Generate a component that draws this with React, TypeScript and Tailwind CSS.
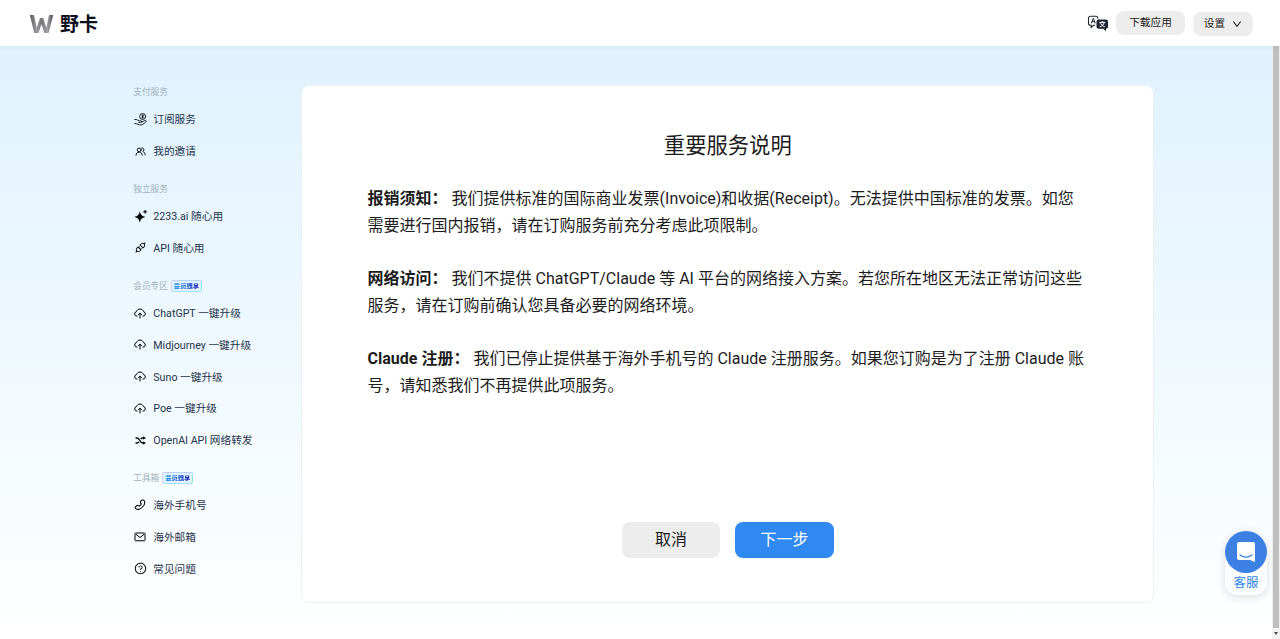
import type { ReactNode } from "react";
import { AiOutlineApi, AiOutlineQuestionCircle } from "react-icons/ai";

const HandCoinIcon = () => (
  <svg viewBox="0 0 24 24" className="w-[13px] h-[13px]" fill="none" stroke="currentColor" strokeWidth="1.6" strokeLinecap="round" strokeLinejoin="round">
    <circle cx="16" cy="6.5" r="5.5" />
    <path d="M17.8 4.8c-1-.7-3.6-.7-3.6.5 0 1.4 3.6.9 3.6 2.4 0 1.3-2.8 1.3-3.8.4M16 3v7" strokeWidth="1.3" />
    <path d="M1.5 12h3c2 0 3 2.500 5.500 2.500h3c2 0 2 2.800 0 2.800H9M15 16.500l5-2.500c2-1 3.500 1 2 2.300-3 2.900-6 5.700-9.500 5.700-4 0-6-2.500-11-2.500" />
  </svg>
);

const UsersIcon = () => (
  <svg viewBox="0 0 24 20" className="w-[11px] h-[9px]" fill="none" stroke="currentColor" strokeWidth="2" strokeLinecap="round" strokeLinejoin="round">
    <circle cx="9" cy="6.5" r="4.2" />
    <path d="M2 18.500c.3-4.500 3-7 7-7s6.700 2.500 7 7M14.500 2.300c3.500-.6 5.500 1.600 5 4.500-.2 1.500-1.200 2.700-2.500 3.300 3.500.8 5.300 3.700 5.500 7.400" />
  </svg>
);

const SparkIcon = () => (
  <svg viewBox="0 0 24 24" className="w-[13px] h-[13px]" fill="currentColor">
    <path d="M10.800 2.500c1.500 6.500 3.500 8.800 10.500 10.500-7 1.700-9 4-10.500 10.500C9.300 17 7.300 14.700.3 13c7-1.700 9-4 10.500-10.500Z" />
    <path d="M20.500 0c.6 2.100 1.200 2.700 3.300 3.300-2.100.6-2.700 1.200-3.300 3.300-.6-2.100-1.200-2.700-3.300-3.300 2.100-.6 2.700-1.200 3.300-3.300Z" stroke="currentColor" strokeWidth="1" />
  </svg>
);

const CloudUploadIcon = () => (
  <svg viewBox="0 0 24 22" className="w-3 h-[11px]" fill="none" stroke="currentColor" strokeWidth="2" strokeLinecap="round" strokeLinejoin="round">
    <path d="M6 16.300A4.600 4.600 0 0 1 5 7.200C6 3.900 8.800 2 12 2s6 1.900 7 5.200a4.600 4.600 0 0 1-1 9.100" />
    <path d="M12 20v-9.500M8.800 13.500 12 10.200l3.200 3.300" />
  </svg>
);

const ShuffleIcon = () => (
  <svg viewBox="0 0 24 20" className="w-[11px] h-[9px]" fill="none" stroke="currentColor" strokeWidth="3">
    <path d="M1 4.500h3.500c2.500 0 4 2 6 5.500s3.500 5.500 6 5.500H19M1 15.500h3.500c1.700 0 3-.9 4.300-2.600M12.500 7c1.200-1.600 2.400-2.500 4-2.500H19" />
    <path d="M18 .5v8l6-4ZM18 11.500v8l6-4Z" fill="currentColor" stroke="none" />
  </svg>
);

const PhoneIcon = () => (
  <svg viewBox="0 0 24 24" className="w-3 h-3" fill="none" stroke="currentColor" strokeWidth="2.1" strokeLinejoin="round">
    <path d="M14.300 3.200c1.700-1.700 5-1.500 6.200.5 2 3.500.5 8.300-3.500 12.300s-8.800 5.700-12.500 4c-2-1-2.700-3.500-1.200-4.900l1.900-1.600c1.200-1 2.800-1 3.800-.1l1.200 1c2-.9 3.500-2.400 4.500-4.500l-1-1.200c-1-1.200-.9-3.800.6-5.500Z" />
  </svg>
);

const MailIcon = () => (
  <svg viewBox="0 0 24 20" className="w-3 h-2.5" fill="none" stroke="currentColor" strokeWidth="2" strokeLinejoin="round">
    <rect x="2" y="2" width="20" height="15.5" rx="1.5" />
    <path d="m4 4.500 8 6.500 8-6.500" />
  </svg>
);

const LanguageIcon = () => (
  <svg viewBox="0 0 22 18" className="w-[22px] h-[18px]" fill="none">
    <path d="M10.800 3.700V3.300a2 2 0 0 0-2-2H3.500a2 2 0 0 0-2 2v5a2 2 0 0 0 2 2h.7v2.200l2.300-2.200h1.700" stroke="#1f2533" strokeWidth="1.1" />
    <path d="M4.300 8.300 6.300 3.300l2 5M5 6.700h2.700" stroke="#1f2533" strokeWidth="1" />
    <path d="M11.500 4.500h7.500a2 2 0 0 1 2 2v5.300a2 2 0 0 1-2 2v2.500l-2.800-2.500h-4.700a2 2 0 0 1-2-2V6.500a2 2 0 0 1 2-2Z" fill="#1f2533" />
    <path d="M12.300 7.400h6M15.300 6v1.400M17.200 7.600c-.5 2-2 3.500-4.400 4.200M13.400 7.600c.5 2 2 3.500 4.400 4.200" stroke="#fff" strokeWidth="1" />
  </svg>
);

type Item = { label: string; icon: ReactNode };
type Section = { title: string; vip?: boolean; items: Item[] };

const sections: Section[] = [
  {
    title: "支付服务",
    items: [
      { label: "订阅服务", icon: <HandCoinIcon /> },
      { label: "我的邀请", icon: <UsersIcon /> },
    ],
  },
  {
    title: "独立服务",
    items: [
      { label: "2233.ai 随心用", icon: <SparkIcon /> },
      { label: "API 随心用", icon: <AiOutlineApi className="w-[13px] h-[13px]" /> },
    ],
  },
  {
    title: "会员专区",
    vip: true,
    items: [
      { label: "ChatGPT 一键升级", icon: <CloudUploadIcon /> },
      { label: "Midjourney 一键升级", icon: <CloudUploadIcon /> },
      { label: "Suno 一键升级", icon: <CloudUploadIcon /> },
      { label: "Poe 一键升级", icon: <CloudUploadIcon /> },
      { label: "OpenAI API 网络转发", icon: <ShuffleIcon /> },
    ],
  },
  {
    title: "工具箱",
    vip: true,
    items: [
      { label: "海外手机号", icon: <PhoneIcon /> },
      { label: "海外邮箱", icon: <MailIcon /> },
      { label: "常见问题", icon: <AiOutlineQuestionCircle className="w-[13px] h-[13px]" /> },
    ],
  },
];

const notices = [
  {
    title: "报销须知：",
    lines: [
      "我们提供标准的国际商业发票(Invoice)和收据(Receipt)。无法提供中国标准的发票。如您",
      "需要进行国内报销，请在订购服务前充分考虑此项限制。",
    ],
  },
  {
    title: "网络访问：",
    lines: [
      "我们不提供 ChatGPT/Claude 等 AI 平台的网络接入方案。若您所在地区无法正常访问这些",
      "服务，请在订购前确认您具备必要的网络环境。",
    ],
  },
  {
    title: "Claude 注册：",
    lines: [
      "我们已停止提供基于海外手机号的 Claude 注册服务。如果您订购是为了注册 Claude 账",
      "号，请知悉我们不再提供此项服务。",
    ],
  },
];

function Header() {
  return (
    <header className="relative z-10 h-[46px] shrink-0 flex items-center justify-between pl-[29px] pr-[27px] bg-white shadow-[0_1px_6px_rgba(0,0,0,0.06)]">
      <div className="flex items-center gap-[6px] pt-[3px]">
        <svg viewBox="0 0 25 20" className="w-[25px] h-5 -mt-px">
          <defs>
            <linearGradient id="logo" x1="0" x2="1" y1="0" y2="0">
              <stop offset="0" stopColor="#55555b" />
              <stop offset="0.3" stopColor="#a0a0a4" />
              <stop offset="0.5" stopColor="#737378" />
              <stop offset="0.75" stopColor="#a5a5a9" />
              <stop offset="1" stopColor="#4d4d53" />
            </linearGradient>
          </defs>
          <path d="M.8 1h4.200l2.700 12.500L11 4h3.200l3.100 9.500L20 1h4.200l-4.600 18h-4.200l-2.900-9-3 9H5.300Z" fill="url(#logo)" />
        </svg>
        <span className="text-[19px] leading-6 font-bold text-[#0b0f1c]">野卡</span>
      </div>
      <div className="flex items-center text-[10.67px] text-[#222]">
        <div className="pt-px">
          <LanguageIcon />
        </div>
        <button className="ml-[7px] h-6 w-[69px] rounded-lg bg-[#ededed] -mt-px">下载应用</button>
        <button className="ml-2 mt-px h-6 w-[60px] rounded-lg bg-[#ededed] flex items-center justify-center gap-[7px]">
          设置
          <svg viewBox="0 0 10 8" className="w-2.5 h-2" fill="none" stroke="currentColor" strokeWidth="1.1">
            <path d="M1.300 1.500 5 6.300l3.700-4.800" />
          </svg>
        </button>
      </div>
    </header>
  );
}

function Sidebar() {
  return (
    <aside className="w-[168px] shrink-0 pt-[25px]">
      {sections.map((section) => (
        <div key={section.title}>
          <div className="h-[33.33px] pt-[10px] flex items-center gap-1">
            <span className="text-[8.67px] text-[#a3b1bb]">{section.title}</span>
            {section.vip && (
              <span className="h-3 w-[31px] -ml-px -mt-px justify-center flex items-center rounded-[2.5px] border border-l-[#d9cdf0] border-t-[#bcd2f8] border-r-[#8ce8f2] border-b-[#a5e0fb] bg-[#dff3ff]">
                <span className="text-[6.3px] leading-none font-black bg-linear-to-r from-[#2492fb] to-[#2420b0] bg-clip-text text-transparent">
                  会员独享
                </span>
              </span>
            )}
          </div>
          {section.items.map((item) => (
            <a key={item.label} className="h-[31.8px] flex items-center gap-[6px] text-[10.67px] text-[#27324c]">
              <span className="w-3.5 pb-[2px] flex justify-center text-black">{item.icon}</span>
              {item.label}
            </a>
          ))}
        </div>
      ))}
    </aside>
  );
}

function NoticeCard() {
  return (
    <main className="w-[853px] h-[518px] mt-[39px] px-[65px] flex flex-col rounded-lg border border-[#edf0f2] bg-white text-[#1c1c1c]">
      <h1 className="mt-[44px] text-center text-[21.33px] leading-8">重要服务说明</h1>
      <div className="mt-[22.5px] pl-[0.3px] flex flex-col gap-[26px] text-base leading-[27px] whitespace-nowrap">
        {notices.map((n) => (
          <p key={n.title}>
            <strong>{n.title}</strong> {n.lines[0]}
            <br />
            {n.lines[1]}
          </p>
        ))}
      </div>
      <div className="mt-auto mb-[44px] flex justify-center gap-[15px] text-base">
        <button className="w-[98.5px] h-9 rounded-lg bg-[#ededed]">取消</button>
        <button className="w-[98.5px] h-9 rounded-lg bg-[#3089f0] text-white">下一步</button>
      </div>
    </main>
  );
}

export default function App() {
  return (
    <div className="relative h-[639px] w-[1280px] overflow-hidden flex flex-col font-[Roboto,'Noto_Sans_CJK_SC',sans-serif]">
      <Header />
      <div className="flex-1 min-h-0 flex">
        <div className="flex-1 flex items-start pl-[133.3px] bg-linear-to-b from-[#dff2fe] to-white">
          <Sidebar />
          <NoticeCard />
        </div>
        {/* Scrollbar */}
        <div className="w-2 shrink-0 flex flex-col items-center bg-[#f1f1f1]">
          <div className="w-[6px] flex-1 bg-[#bfbfbf]" />
          <div className="h-[11px] flex items-center">
            <div className="border-x-[2.5px] border-t-[3px] border-x-transparent border-t-[#444]" />
          </div>
        </div>
      </div>

      {/* Support widget */}
      <div className="absolute z-20 left-[1225px] top-[530.5px] w-[42px] h-[64px] rounded-t-[21px] rounded-b-xl bg-[#fafcfd] shadow-[0_2px_10px_rgba(0,0,0,0.13)] flex flex-col items-center">
        <div className="w-[42px] h-[42px] rounded-full bg-[#3b80e2] flex items-center justify-center">
          <svg viewBox="0 0 20 22" className="w-5 h-[22px]">
            <path d="M3 1h14a2 2 0 0 1 2 2v18l-5-2H3a2 2 0 0 1-2-2V3a2 2 0 0 1 2-2Z" fill="#fff" />
            <path d="M4 14c3.500 2.800 8.500 2.800 12 0" fill="none" stroke="#3b80e2" strokeWidth="1.3" strokeLinecap="round" />
          </svg>
        </div>
        <span className="text-[12.5px] leading-5 text-[#2f86ee]">客服</span>
      </div>
    </div>
  );
}
